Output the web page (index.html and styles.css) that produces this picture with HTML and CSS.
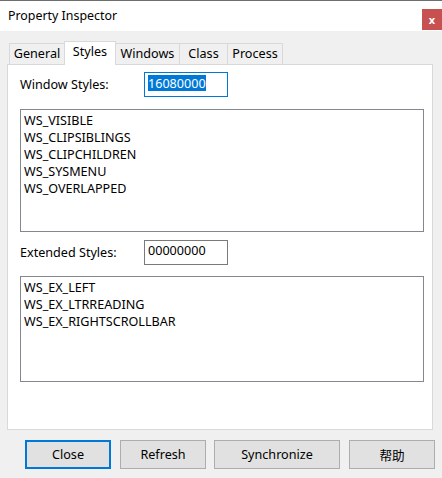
FILE: index.html
```html
<!DOCTYPE html>
<html>
<head>
<meta charset="utf-8">
<link rel="stylesheet" href="styles.css">
</head>
<body>
<div class="window">
  <div class="titlebar">
    <span class="title">Property Inspector</span>
    <span class="close">x</span>
  </div>
  <div class="main">
    <div class="tabs">
      <div class="tab t-general">General</div>
      <div class="tab t-styles active">Styles</div>
      <div class="tab t-windows">Windows</div>
      <div class="tab t-class">Class</div>
      <div class="tab t-process">Process</div>
    </div>
    <div class="panel">
      <div class="row">
        <span class="label">Window Styles:</span>
        <div class="input focused"><span class="sel">16080000</span></div>
      </div>
      <div class="list list1">
        <div class="item">WS_VISIBLE</div>
        <div class="item">WS_CLIPSIBLINGS</div>
        <div class="item">WS_CLIPCHILDREN</div>
        <div class="item">WS_SYSMENU</div>
        <div class="item">WS_OVERLAPPED</div>
      </div>
      <div class="row row2">
        <span class="label">Extended Styles:</span>
        <div class="input"><span>00000000</span></div>
      </div>
      <div class="list list2">
        <div class="item">WS_EX_LEFT</div>
        <div class="item">WS_EX_LTRREADING</div>
        <div class="item">WS_EX_RIGHTSCROLLBAR</div>
      </div>
    </div>
    <div class="buttons">
      <button class="btn default">Close</button>
      <button class="btn">Refresh</button>
      <button class="btn wide">Synchronize</button>
      <button class="btn">帮助</button>
    </div>
  </div>
</div>
</body>
</html>
```

FILE: styles.css
```css
html, body {
  margin: 0;
  padding: 0;
  background: #f0f0f0;
}
body {
  font-family: "Noto Sans", "Noto Sans CJK SC", sans-serif;
  font-size: 12.6px;
  color: #000;
}
.window {
  width: 442px;
  height: 478px;
  background: #f0f0f0;
  overflow: hidden;
}
.titlebar {
  height: 30px;
  border-top: 1px solid #6e6e6e;
  background: #fff;
  display: flex;
  align-items: center;
  justify-content: space-between;
  padding-left: 8px;
}
.title {
  font-size: 12.4px;
  color: #000;
  margin-top: -1px;
}
.close {
  width: 20px;
  height: 21px;
  background: #c75050;
  color: #fff;
  font-weight: bold;
  font-size: 11px;
  display: flex;
  align-items: center;
  justify-content: center;
  align-self: flex-start;
  margin-top: 8px;
  line-height: 1;
}
.main {
  padding: 10px 0 0 7px;
}
.tabs {
  display: flex;
  align-items: flex-end;
  height: 23px;
  padding-left: 2px;
}
.tab {
  box-sizing: border-box;
  height: 21px;
  border: 1px solid #d9d9d9;
  border-bottom: none;
  background: #f0f0f0;
  display: flex;
  align-items: center;
  justify-content: center;
  padding-bottom: 1px;
  margin-left: -1px;
}
.t-general { width: 56px; margin-left: 0; }
.t-styles { width: 52px; }
.t-windows { width: 65px; }
.t-class { width: 49px; }
.t-process { width: 56px; }
.tab.active {
  height: 24px;
  background: #fff;
  position: relative;
  z-index: 1;
  margin-bottom: -1px;
  padding-bottom: 4px;
}
.panel {
  box-sizing: border-box;
  width: 426px;
  height: 366px;
  border: 1px solid #d9d9d9;
  background: #fff;
  padding: 7px 8px 0 12px;
}
.row {
  display: flex;
  align-items: center;
  height: 25px;
}
.label {
  width: 124px;
  margin-top: -1px;
}
.input {
  box-sizing: border-box;
  width: 84px;
  height: 25px;
  border: 1px solid #7a7a7a;
  padding: 2px 3px 0 3px;
  line-height: 15px;
}
.input.focused {
  border-color: #0078d7;
}
.sel {
  background: #0078d7;
  color: #fff;
  display: inline-block;
  line-height: 15px;
  padding-top: 1px;
}
.list {
  box-sizing: border-box;
  width: 404px;
  border: 1px solid #828790;
  padding: 2px 3px;
}
.list1 {
  height: 123px;
  margin-top: 12px;
}
.row2 {
  margin-top: 8px;
}
.list2 {
  height: 106px;
  margin-top: 11px;
}
.item {
  line-height: 17px;
  height: 17px;
}
.buttons {
  display: flex;
  margin-top: 10px;
  padding-left: 18px;
  gap: 9px;
}
.btn {
  box-sizing: border-box;
  width: 86px;
  height: 29px;
  background: #e1e1e1;
  border: 1px solid #adadad;
  font-family: "Noto Sans", "Noto Sans CJK SC", sans-serif;
  font-size: 12.6px;
  color: #000;
  padding: 0;
  margin: 0;
}
.btn.wide {
  width: 126px;
  margin-left: -1px;
}
.btn.default {
  border: 2px solid #0078d7;
}
```
